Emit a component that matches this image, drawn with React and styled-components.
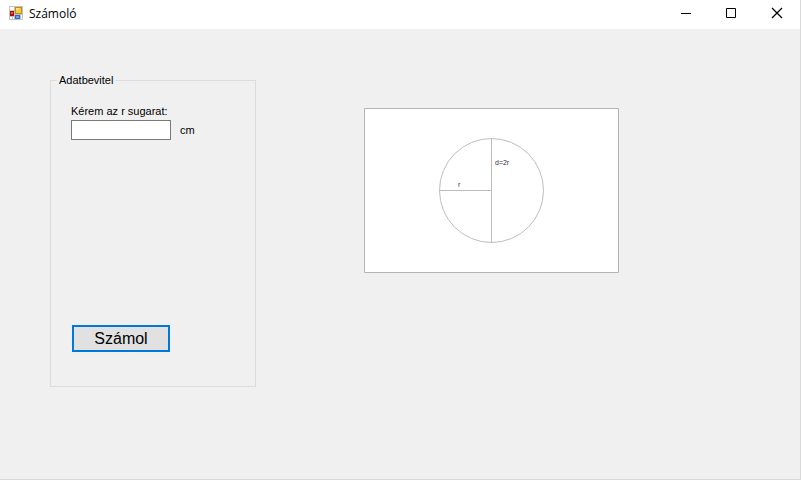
import React from "react";
import styled, { createGlobalStyle } from "styled-components";

const GlobalStyle = createGlobalStyle`
  * { box-sizing: border-box; }
  body { margin: 0; background: #f0f0f0; }
`;

const Window = styled.div`
  display: flex;
  flex-direction: column;
  min-height: 100vh;
  background: #f0f0f0;
  border: solid #d9d9d9;
  border-width: 0 1px 1px 0;
  color: #000;
  font: 11px/14px "Liberation Sans", Arial, sans-serif;
`;

const TitleBar = styled.header`
  display: flex;
  align-items: flex-start;
  height: 29px;
  background: #fff;
`;

const AppIcon = styled.svg`
  flex: none;
  width: 14px;
  height: 14px;
  margin: 6px 6px 0 9px;
`;

const Title = styled.h1`
  flex: 1;
  margin: 5px 0 0;
  font: 400 12px/18px "Segoe UI", "Open Sans", sans-serif;
`;

const CaptionButton = styled.button`
  width: 46px;
  height: 29px;
  padding: 0 0 3px;
  border: 0;
  background: transparent;
  line-height: 0;

  &:hover { background: #e5e5e5; }
`;

const Client = styled.main`
  display: flex;
  flex: 1;
  align-items: flex-start;
  gap: 108px;
  padding: 45px 50px;
`;

const GroupBox = styled.fieldset`
  display: flex;
  flex-direction: column;
  align-items: flex-start;
  width: 206px;
  height: 313px;
  margin: 0;
  padding: 17px 20px 34px;
  border: 1px solid #dcdcdc;
`;

const Legend = styled.legend`
  margin-left: -14px;
  padding: 0 2px;
  line-height: 13px;
`;

const Label = styled.label`
  margin-bottom: 2px;
`;

const Field = styled.div`
  display: flex;
  align-items: center;
  gap: 9px;
`;

const TextBox = styled.input`
  width: 100px;
  height: 20px;
  padding: 0 3px;
  border: 1px solid #7a7a7a;
  background: #fff;
  font: inherit;
`;

const SubmitButton = styled.button`
  width: 98px;
  height: 27px;
  margin: auto 0 0 1px;
  padding: 0;
  border: 2px solid #0078d7;
  background: #e1e1e1;
  color: #000;
  font: 16px/20px "Liberation Sans", Arial, sans-serif;
`;

const Picture = styled.svg`
  flex: none;
  width: 255px;
  height: 165px;
  margin-top: 34px;
  background: #fff;
  font: 7px "Liberation Sans", Arial, sans-serif;
`;

const controls = [
  { label: "Kis méret", path: "M1 5.5H11" },
  { label: "Teljes méret", path: "M.5 .5H9.5V9.5H.5Z" },
  { label: "Bezárás", path: "M0 0L10 10M10 0L0 10", width: 1.3 },
];

function FormIcon() {
  return (
    <AppIcon viewBox="0 0 14 14" aria-hidden="true" shapeRendering="crispEdges">
      <path fill="#c3c3c3" d="M0 0H14V14H0Z" />
      <path fill="#fff" d="M1 1H5V4H1ZM1 11H3V13H1ZM4 11H5V13H4ZM12 9H13V13H12Z" />
      <path fill="#a51212" d="M1 5H5V10H1Z" />
      <path fill="#e8543c" d="M2 6H4V8H2Z" />
      <path fill="#c98a10" d="M6 1H13V8H6Z" />
      <path fill="#f7c83a" d="M7 2H12V7H7Z" />
      <path fill="#ffe48a" d="M7 2H10V4H7Z" />
      <path fill="#2f66c8" d="M6 9H11V13H6Z" />
      <path fill="#6ba0f4" d="M7 10H10V12H7Z" />
    </AppIcon>
  );
}

export default function App() {
  return (
    <>
      <GlobalStyle />
      <Window>
        <TitleBar>
          <FormIcon />
          <Title>Számoló</Title>
          {controls.map(({ label, path, width = 1 }) => (
            <CaptionButton key={label} type="button" aria-label={label}>
              <svg width="10" height="10" viewBox="0 0 10 10" overflow="visible">
                <path d={path} fill="none" stroke="#000" strokeWidth={width} />
              </svg>
            </CaptionButton>
          ))}
        </TitleBar>
        <Client>
          <GroupBox>
            <Legend>Adatbevitel</Legend>
            <Label htmlFor="radius">Kérem az r sugarat:</Label>
            <Field>
              <TextBox id="radius" type="text" />
              <span>cm</span>
            </Field>
            <SubmitButton type="button">Számol</SubmitButton>
          </GroupBox>
          <Picture viewBox="0 0 255 165" role="img" aria-label="Kör sugara és átmérője">
            <g fill="none" stroke="#bdbdbd">
              <path stroke="#b4b4b4" d="M.5 .5H254.5V164.5H.5Z" />
              <circle cx="127.5" cy="82.5" r="52" />
              <path d="M127.5 30V135M75 82.5H127" />
            </g>
            <text x="94" y="79" fill="#333">r</text>
            <text x="131" y="57" fill="#333">d=2r</text>
          </Picture>
        </Client>
      </Window>
    </>
  );
}
